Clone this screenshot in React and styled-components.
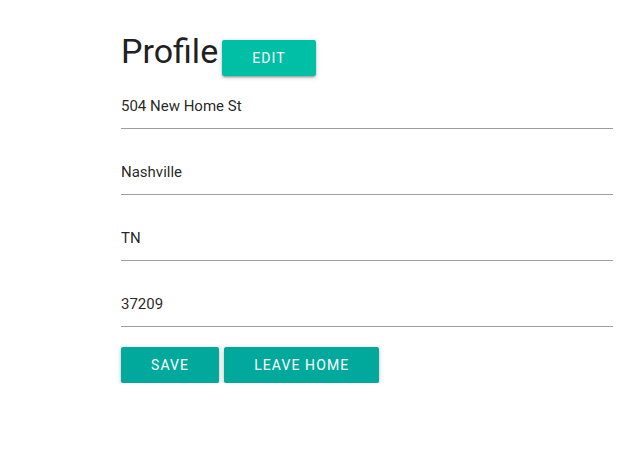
import React, { useState } from "react";
import styled, { createGlobalStyle } from "styled-components";

const GlobalStyle = createGlobalStyle`
  body {
    margin: 0;
    background: #fff;
    font-family: Roboto, "Liberation Sans", sans-serif;
    color: rgba(0, 0, 0, 0.87);
  }
`;

const Page = styled.div`
  width: 492px;
  margin-left: 121px;
  padding-top: 29px;
`;

const Header = styled.div`
  display: flex;
  align-items: baseline;
  gap: 4px;
`;

const Title = styled.h4`
  margin: 0;
  font-size: 34px;
  font-weight: 400;
  line-height: 44px;
  color: #212121;
`;

const Button = styled.button`
  height: 36px;
  padding: 0 30px;
  border: none;
  border-radius: 2px;
  background: ${(p) => p.$bg || "#00a99c"};
  color: #fff;
  font-family: Roboto, "Liberation Sans", sans-serif;
  font-size: 14px;
  font-weight: 400;
  letter-spacing: 1.1px;
  text-transform: uppercase;
  line-height: 36px;
  box-shadow: 0 2px 2px 0 rgba(0, 0, 0, 0.14), 0 3px 1px -2px rgba(0, 0, 0, 0.12),
    0 1px 5px 0 rgba(0, 0, 0, 0.2);
  cursor: pointer;
`;

const Form = styled.form`
  display: flex;
  flex-direction: column;
  margin-top: 7px;
`;

const Field = styled.input`
  box-sizing: border-box;
  height: 46px;
  margin-top: ${(p) => (p.$first ? "0" : "20px")};
  padding: 0;
  border: none;
  border-bottom: 1px solid #9e9e9e;
  outline: none;
  background: transparent;
  font-family: Roboto, "Liberation Sans", sans-serif;
  font-size: 15px;
  color: rgba(0, 0, 0, 0.87);
`;

const Actions = styled.div`
  display: flex;
  gap: 5px;
  margin-top: 20px;
`;

export default function App() {
  const [values, setValues] = useState(["504 New Home St", "Nashville", "TN", "37209"]);

  const update = (i) => (e) => {
    const next = [...values];
    next[i] = e.target.value;
    setValues(next);
  };

  return (
    <>
      <GlobalStyle />
      <Page>
        <Header>
          <Title>Profile</Title>
          <Button $bg="#00bfa5">Edit</Button>
        </Header>
        <Form onSubmit={(e) => e.preventDefault()}>
          {values.map((v, i) => (
            <Field key={i} $first={i === 0} value={v} onChange={update(i)} />
          ))}
        </Form>
        <Actions>
          <Button>Save</Button>
          <Button>Leave Home</Button>
        </Actions>
      </Page>
    </>
  );
}
